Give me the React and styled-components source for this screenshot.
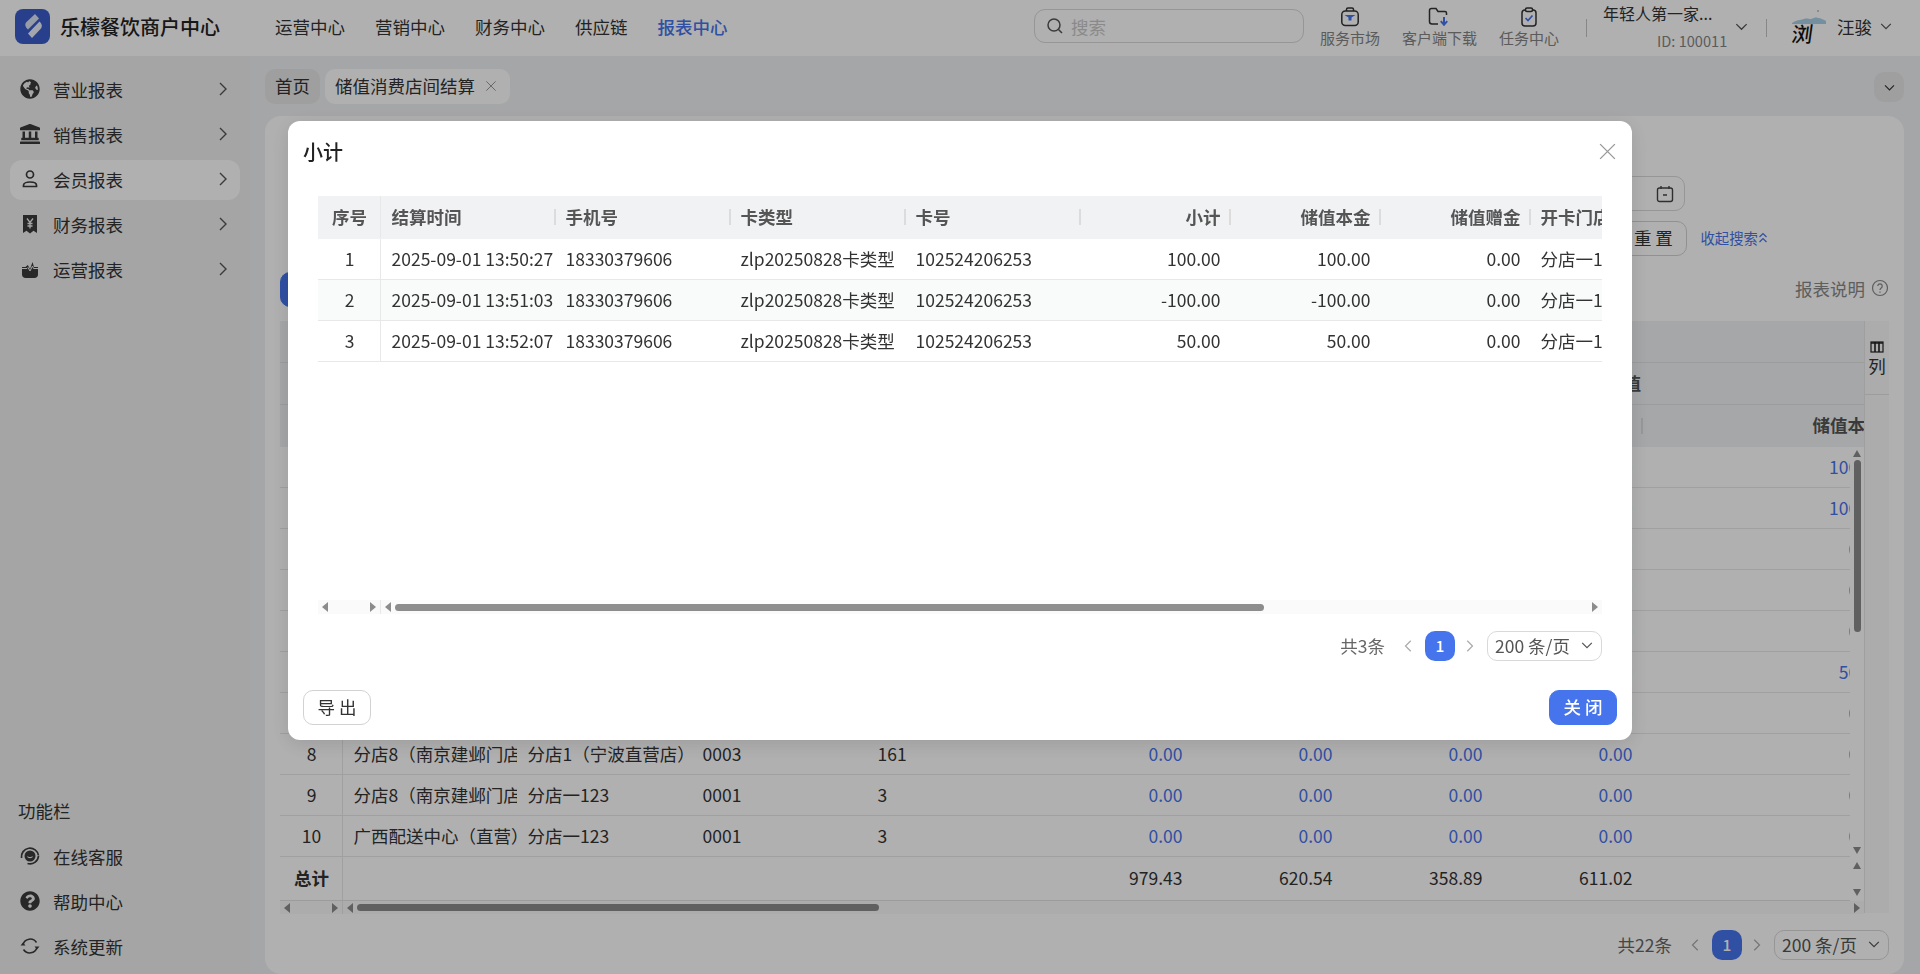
import React from 'react';
import styled, { createGlobalStyle } from 'styled-components';
import { FaGlobeAmericas, FaLandmark, FaQuestionCircle } from 'react-icons/fa';

const GlobalStyle = createGlobalStyle`
  * { box-sizing: border-box; }
  html, body { margin: 0; padding: 0; height: 100%; overflow: hidden; }
  body {
    font-family: "Noto Sans CJK SC", "Noto Sans", sans-serif;
    font-size: 17.5px;
    color: #333;
    background: #f0f1f3;
  }
`;

const BLUE = '#4674ec';

const Page = styled.div`
  width: 1920px;
  height: 974px;
  display: flex;
  flex-direction: column;
  overflow: hidden;
`;

const Header = styled.header`
  height: 56px;
  flex-shrink: 0;
  display: flex;
  align-items: center;
  padding: 0 27px 4px 15px;
  background: #fff;
`;

const Brand = styled.div`
  display: flex;
  align-items: center;
  gap: 10px;
  font-size: 20px;
  font-weight: 500;
  color: #222;
  white-space: nowrap;
`;

const Nav = styled.nav`
  display: flex;
  gap: 30px;
  margin-left: 55px;
`;

const NavLink = styled.a`
  color: ${p => (p.$active ? BLUE : '#333')};
  font-weight: ${p => (p.$active ? 500 : 400)};
  white-space: nowrap;
`;

const HeaderRight = styled.div`
  margin-left: auto;
  display: flex;
  align-items: center;
`;

const SearchBox = styled.div`
  width: 270px;
  height: 34px;
  margin-right: 16px;
  display: flex;
  align-items: center;
  gap: 7px;
  padding-left: 11px;
  border: 1px solid #d9d9d9;
  border-radius: 11px;
  color: #c9c9c9;
`;

const HeadAction = styled.div`
  display: flex;
  flex-direction: column;
  align-items: center;
  margin-right: 22px;
  margin-top: 2px;
  font-size: 15px;
  line-height: 18px;
  color: #858585;
  white-space: nowrap;
  &:nth-of-type(4) { margin-right: 27px; }
  svg { display: block; margin-bottom: 2px; }
`;

const HeadRule = styled.span`
  width: 1px;
  height: 18px;
  margin-left: ${p => p.$left || 0}px;
  margin-top: 3px;
  background: #c4c4c4;
`;

const Account = styled.div`
  width: 131px;
  margin-left: 16px;
  line-height: 20px;
  margin-top: 1px;
  small {
    display: block;
    margin-top: 8px;
    padding-left: 54px;
    font-size: 14.6px;
    color: #858585;
  }
`;

const AccountName = styled.div`
  white-space: nowrap;
  font-size: 16px;
`;

const Avatar = styled.div`
  width: 34px;
  height: 34px;
  margin-left: 25px;
  margin-top: 4px;
  position: relative;
  font-weight: 500;
  font-size: 21px;
  line-height: 44px;
  color: #111;
  svg { position: absolute; left: 0; top: -2px; }
`;

const AvatarGlyph = styled.span`
  display: inline-block;
  transform: skewX(-8deg);
`;

const UserName = styled.span`
  margin-left: 11px;
  margin-right: 7px;
  white-space: nowrap;
`;

const Body = styled.div`
  flex: 1;
  min-height: 0;
  display: flex;
`;

const Sidebar = styled.aside`
  width: 250px;
  flex-shrink: 0;
  padding: 14px 10px 7px;
  display: flex;
  flex-direction: column;
  justify-content: space-between;
  background: #f0f0f0;
`;

const MenuGroup = styled.div`
  display: flex;
  flex-direction: column;
  gap: 5px;
`;

const MenuItem = styled.div`
  height: 40px;
  display: flex;
  align-items: center;
  gap: 13px;
  padding: 0 10px 2px;
  border-radius: 12px;
  background: ${p => (p.$active ? '#fff' : 'transparent')};
  white-space: nowrap;
  svg:first-child { width: 20px; height: 20px; flex-shrink: 0; color: #3a3a3a; }
  svg:last-child:not(:first-child) { margin-left: auto; }
`;

const MenuCaption = styled.div`
  height: 24px;
  margin: 0 0 9px 8px;
  line-height: 24px;
  color: #333;
`;

const Main = styled.main`
  flex: 1;
  min-width: 0;
  padding: 13px 16px 0 15px;
  display: flex;
  flex-direction: column;
`;

const TabBar = styled.div`
  height: 35px;
  margin-bottom: 12px;
  flex-shrink: 0;
  display: flex;
  gap: 5px;
`;

const Tab = styled.div`
  height: 35px;
  display: flex;
  align-items: center;
  gap: 10px;
  padding: 0 ${p => (p.$current ? 13 : 10)}px 2px 10px;
  border-radius: 10px;
  background: ${p => (p.$current ? '#fff' : '#e6e6e6')};
  white-space: nowrap;
`;

const TabToggle = styled.div`
  width: 30px;
  height: 30px;
  margin: 3px 0 0 auto;
  display: flex;
  align-items: center;
  justify-content: center;
  border-radius: 10px;
  background: #e6e6e6;
`;

const Card = styled.section`
  flex: 1;
  min-height: 0;
  padding: 60px 15px 0;
  border-radius: 16px;
  background: #fff;
  overflow: hidden;
`;

const FormRow = styled.div`
  display: flex;
  justify-content: flex-end;
  align-items: center;
  gap: 13px;
  margin-bottom: 10px;
  padding-right: ${p => p.$inset}px;
`;

const DateInput = styled.div`
  width: 300px;
  height: 35px;
  display: flex;
  align-items: center;
  justify-content: flex-end;
  padding-right: 10px;
  border: 1px solid #d9d9d9;
  border-radius: 10px;
`;

const Button = styled.button`
  width: 68px;
  height: 35px;
  padding: 0 0 2px;
  border-radius: 10px;
  border: 1px solid ${p => (p.$primary ? BLUE : '#d2d2d2')};
  background: ${p => (p.$primary ? BLUE : '#fff')};
  color: ${p => (p.$primary ? '#fff' : '#333')};
  font: inherit;
  font-weight: ${p => (p.$primary ? 500 : 400)};
  white-space: nowrap;
`;

const TextLink = styled.a`
  color: ${BLUE};
  font-size: 14.4px;
  white-space: nowrap;
  display: flex;
  align-items: center;
  padding-bottom: 2px;
`;

const Toolbar = styled.div`
  height: 34px;
  margin: 16px 0 15px;
  display: flex;
  align-items: center;
  justify-content: space-between;
`;

const ReportHint = styled.div`
  display: flex;
  align-items: center;
  gap: 6px;
  padding-bottom: 2px;
  color: #888;
  white-space: nowrap;
`;

const TableFrame = styled.div`
  display: flex;
  height: 592px;
`;

const TableArea = styled.div`
  flex: 1;
  min-width: 0;
  display: flex;
  flex-direction: column;
`;

const ColumnSetter = styled.div`
  width: 25px;
  flex-shrink: 0;
  border-left: 1px solid #e6e6e6;
  background: #f9f9f9;
`;

const ColumnSetterTop = styled.div`
  height: 74px;
  padding-top: 20px;
  display: flex;
  flex-direction: column;
  align-items: center;
  border-bottom: 1px solid #e4e4e4;
  line-height: 22px;
  svg { margin-bottom: 2px; }
`;

const HeadWrap = styled.div`
  overflow: hidden;
  flex-shrink: 0;
  background: #f0f2f4;
`;

const GridRow = styled.div`
  display: grid;
  grid-template-columns: ${p => p.$cols};
  width: max-content;
  height: ${p => p.$h}px;
  background: ${p => p.$bg || 'transparent'};
  border-bottom: 1px solid ${p => p.$line || '#e8e8e8'};
`;

const Cell = styled.div`
  min-width: 0;
  display: flex;
  align-items: center;
  justify-content: ${p => (p.$align === 'right' ? 'flex-end' : p.$align === 'center' ? 'center' : 'flex-start')};
  padding: 0 9.5px 2px 10.5px;
  white-space: nowrap;
  overflow: hidden;
  color: ${p => (p.$link ? BLUE : '#333')};
  border-right: ${p => (p.$fixed ? '1px solid #e8e8e8' : '0')};
  grid-column: ${p => p.$span || 'auto'};
`;

const HeadCell = styled(Cell)`
  position: relative;
  overflow: visible;
  font-weight: 700;
  color: #555;
  ${p => p.$plain ? '' : `
  &::after {
    content: '';
    position: absolute;
    right: -1px;
    top: 50%;
    width: 2px;
    height: 16px;
    margin-top: -8px;
    background: #dcdcdc;
  }`}
`;

const GroupCell = styled(HeadCell)`
  padding-right: 1px;
`;

const Clip = styled.div`
  overflow: hidden;
  flex: 1;
  min-width: 0;
`;

const BodyPart = styled.div`
  display: flex;
  flex-shrink: 0;
  height: ${p => p.$h}px;
`;

const VScroll = styled.div`
  width: 14px;
  flex-shrink: 0;
  padding: ${p => p.$pad}px 0;
  display: flex;
  flex-direction: column;
  align-items: center;
`;

const VThumb = styled.div`
  width: 7px;
  height: ${p => p.$h}px;
  margin-top: 3px;
  border-radius: 4px;
  background: #8c8c8c;
`;

const TriUp = styled.i`
  width: 0;
  height: 0;
  border: 4.5px solid transparent;
  border-top: 0;
  border-bottom: 7px solid #8c8c8c;
`;

const TriDown = styled(TriUp)`
  margin-top: auto;
  border-bottom: 0;
  border-top: 7px solid #8c8c8c;
`;

const TriLeft = styled.i`
  width: 0;
  height: 0;
  flex-shrink: 0;
  border: 5px solid transparent;
  border-left: 0;
  border-right: 6px solid #8c8c8c;
`;

const TriRight = styled.i`
  width: 0;
  height: 0;
  flex-shrink: 0;
  border: 5px solid transparent;
  border-right: 0;
  border-left: 6px solid #8c8c8c;
`;

const HScroll = styled.div`
  height: ${p => p.$h}px;
  flex-shrink: 0;
  display: flex;
  align-items: center;
  background: #fafafa;
`;

const HFixed = styled.div`
  width: 63px;
  height: 100%;
  padding: 0 4px;
  display: flex;
  align-items: center;
  justify-content: space-between;
  border-right: 1px solid #e8e8e8;
`;

const HTrack = styled.div`
  flex: 1;
  min-width: 0;
  padding: 0 4px;
  display: flex;
  align-items: center;
  ${TriRight} { margin-left: auto; }
`;

const HThumb = styled.div`
  width: ${p => p.$w}px;
  height: 7px;
  margin-left: 4px;
  border-radius: 4px;
  background: #8c8c8c;
`;

const PagerRow = styled.div`
  height: 30px;
  flex-shrink: 0;
  display: flex;
  align-items: center;
  justify-content: flex-end;
  margin-top: ${p => p.$top}px;
  white-space: nowrap;
`;

const PagerTotal = styled.span`
  margin-right: 17px;
  padding-bottom: 2px;
  color: #666;
`;

const PagerNum = styled.span`
  width: 30px;
  height: 30px;
  margin: 0 7px 0 9px;
  padding-bottom: 2px;
  display: flex;
  align-items: center;
  justify-content: center;
  border-radius: 10px;
  background: ${BLUE};
  color: #fff;
  font-size: 15.5px;
  font-weight: 500;
`;

const PagerSelect = styled.div`
  width: 115px;
  height: 30px;
  margin-left: 11px;
  padding: 0 7px 2px;
  display: flex;
  align-items: center;
  justify-content: space-between;
  border: 1px solid #d9d9d9;
  border-radius: 10px;
  color: #555;
`;

const Overlay = styled.div`
  position: fixed;
  inset: 0;
  padding-top: 121px;
  display: flex;
  justify-content: center;
  align-items: flex-start;
  background: rgba(0, 0, 0, 0.31);
`;

const Modal = styled.div`
  width: 1344px;
  height: 619px;
  padding: 0 15px 15px;
  display: flex;
  flex-direction: column;
  border-radius: 12px;
  background: #fff;
  box-shadow: 0 4px 20px rgba(0, 0, 0, 0.12);
`;

const ModalHead = styled.div`
  height: 62px;
  padding-bottom: 2px;
  flex-shrink: 0;
  display: flex;
  align-items: center;
  justify-content: space-between;
  font-size: 20px;
  font-weight: 500;
  color: #222;
  margin-bottom: 13px;
`;

const ModalTable = styled.div`
  margin: 0 15px;
  height: 418px;
  flex-shrink: 0;
  display: flex;
  flex-direction: column;
`;

const ModalRows = styled.div`
  flex: 1;
  min-height: 0;
  overflow: hidden;
`;

const ModalFoot = styled.div`
  margin-top: auto;
  display: flex;
  justify-content: space-between;
`;

const ModalPager = styled.div`
  padding-right: 15px;
`;

const Chevron = ({ dir = 'right', size = 16, color = '#555' }) => {
  const d = { right: 'M6 2l6 6-6 6', down: 'M2.5 5.5L8 11l5.5-5.5', left: 'M10 2L4 8l6 6', up: 'M2.5 10.5L8 5l5.5 5.5' }[dir];
  return (
    <svg width={size} height={size} viewBox="0 0 16 16" fill="none" stroke={color} strokeWidth="1.4">
      <path d={d} />
    </svg>
  );
};

const LogoIcon = () => (
  <svg width="35" height="35" viewBox="0 0 35 35">
    <rect width="35" height="35" rx="8" fill="#3a5ecb" />
    <path d="M20 5l4 4.500L13 20.500c-3-2.500-3.500-5.500-1.500-7.500z" fill="#dbe2f5" />
    <path d="M24.500 12.500c2.800 2.500 3 5.500 1 7.500l-8.500 9-4-4.500z" fill="#eef1fb" />
  </svg>
);

const MemberIcon = () => (
  <svg viewBox="0 0 20 20" fill="none" stroke="currentColor" strokeWidth="1.7">
    <circle cx="10" cy="5.500" r="3.500" />
    <path d="M3.500 17.500v-1.200c0-2 2.800-3.300 6.500-3.300s6.500 1.300 6.500 3.300v1.200z" />
  </svg>
);

const ReceiptIcon = () => (
  <svg viewBox="0 0 20 20">
    <path d="M3 1h14v18l-3.500-2.300L10 19.500l-3.500-2.800L3 19z" fill="currentColor" />
    <path d="M7 4.500l3 4 3-4M10 8.500v6M7.500 9.500h5M7.500 12h5" fill="none" stroke="#f0f0f0" strokeWidth="1.300" />
  </svg>
);

const OpsIcon = () => (
  <svg viewBox="0 0 20 20">
    <path d="M2 8h3.500l2.300-2 2.200 4 2.500-7 1.500 5H18v7.500c0 2-1.500 3.500-3.500 3.500h-9C3.500 19 2 17.500 2 15.500z" fill="currentColor" />
    <path d="M2 9.500h5l1-1 2 3.500 2.500-5 1 2.500H18" fill="none" stroke="#f0f0f0" strokeWidth="1" />
  </svg>
);

const ServiceIcon = () => (
  <svg viewBox="0 0 20 20" fill="none" stroke="currentColor" strokeWidth="1.700">
    <path d="M1.500 12a8.500 8.500 0 0 1 17-2.500" />
    <path d="M18.500 10a8.500 8.500 0 0 1-11 7.500" />
    <circle cx="10" cy="10" r="5.500" fill="currentColor" stroke="none" />
    <path d="M7.500 10.500c1 1.500 4 1.500 5 0" stroke="#f0f0f0" strokeWidth="1.200" />
  </svg>
);

const RefreshIcon = () => (
  <svg viewBox="0 0 20 20" fill="none" stroke="currentColor" strokeWidth="1.500">
    <path d="M3 8.500A7.500 7.500 0 0 1 16.500 6.500" />
    <path d="M17 11.500A7.500 7.500 0 0 1 3.500 13.500" />
    <path d="M14.500 10.500h5L17 13.500zM.500 9.500h5L3 6.500z" fill="currentColor" stroke="none" />
  </svg>
);

const MarketIcon = () => (
  <svg width="20" height="20" viewBox="0 0 20 20" fill="none" stroke="#333" strokeWidth="1.500">
    <path d="M6.500 4V2.500c0-.8.700-1.500 1.500-1.500h4c.8 0 1.500.7 1.500 1.500V4" />
    <rect x="1.800" y="4" width="16.400" height="14.500" rx="3.500" />
    <path d="M4.500 8h11l-4 2.500v3h-3v-3z" fill={BLUE} stroke="none" />
  </svg>
);

const ClientIcon = () => (
  <svg width="22" height="20" viewBox="0 0 22 20" fill="none" stroke="#333" strokeWidth="1.500">
    <path d="M10 17H4a2.500 2.500 0 0 1-2.500-2.500V3.500C1.500 2.300 2.300 1.500 3.500 1.500H8l2 3h7c1 0 1.500.7 1.500 1.500v2" />
    <path d="M16 10v7M12.800 14.200l3.200 3.600 3.200-3.600" stroke={BLUE} strokeWidth="2" />
  </svg>
);

const TaskIcon = () => (
  <svg width="20" height="20" viewBox="0 0 20 20" fill="none" stroke="#333" strokeWidth="1.500">
    <rect x="3" y="3" width="14" height="16" rx="3" />
    <rect x="6.500" y="1" width="7" height="3.500" rx="1.500" fill="#fff" />
    <path d="M6.500 11l2.500 2.500 4.500-5" stroke={BLUE} strokeWidth="1.700" />
  </svg>
);

const SearchIcon = ({ color }) => (
  <svg width="18" height="18" viewBox="0 0 18 18" fill="none" stroke={color} strokeWidth="1.500">
    <circle cx="8" cy="8" r="6" />
    <path d="M12.500 12.500L16 16" />
  </svg>
);

const CloudIcon = () => (
  <svg width="34" height="18" viewBox="0 0 34 18">
    <path d="M0 14c4-3 8-3 12-4 2-1 5 0 7 0 3-1 5-2 7-1 3 0 6 2 8 3v3H0z" fill="#a9d0e6" />
    <circle cx="26" cy="2" r="0.800" fill="#888" />
  </svg>
);

const CalendarIcon = () => (
  <svg width="18" height="18" viewBox="0 0 18 18" fill="none" stroke="#444" strokeWidth="1.400">
    <rect x="1.500" y="3" width="15" height="13.500" rx="2" />
    <path d="M5 1v3M13 1v3M7 10h4" />
  </svg>
);

const HelpIcon = () => (
  <svg width="18" height="18" viewBox="0 0 18 18" fill="none" stroke="#888" strokeWidth="1.200">
    <circle cx="9" cy="9" r="7.500" />
    <path d="M6.800 7a2.200 2.200 0 1 1 3.400 1.900C9.400 9.500 9 10 9 11M9 12.500v1.300" />
  </svg>
);

const ColumnsIcon = () => (
  <svg width="14" height="12" viewBox="0 0 14 12" fill="none" stroke="#222" strokeWidth="1.200">
    <rect x="1" y="1" width="12" height="10" />
    <path d="M1 2h12M5 1v10M9 1v10" strokeWidth="1.600" />
  </svg>
);

const ArrowsIcon = () => (
  <svg width="10" height="12" viewBox="0 0 10 12" fill="none" stroke={BLUE} strokeWidth="1.200">
    <path d="M1.500 5l3.500-3.500L8.500 5M1.500 10L5 6.500 8.500 10" />
  </svg>
);

const CrossIcon = ({ size, color }) => (
  <svg width={size} height={size} viewBox="0 0 18 18" fill="none" stroke={color} strokeWidth="1.300">
    <path d="M2 2l14 14M16 2L2 16" />
  </svg>
);

const HScrollbar = ({ h, thumb }) => (
  <HScroll $h={h}>
    <HFixed>
      <TriLeft />
      <TriRight />
    </HFixed>
    <HTrack>
      <TriLeft />
      <HThumb $w={thumb} />
      <TriRight />
    </HTrack>
  </HScroll>
);

const Pager = ({ total, top }) => (
  <PagerRow $top={top}>
    <PagerTotal>共{total}条</PagerTotal>
    <Chevron dir="left" size={14} color="#aaa" />
    <PagerNum>1</PagerNum>
    <Chevron size={14} color="#aaa" />
    <PagerSelect>
      200 条/页
      <Chevron dir="down" size={14} />
    </PagerSelect>
  </PagerRow>
);

const menus = [
  { label: '营业报表', icon: <FaGlobeAmericas /> },
  { label: '销售报表', icon: <FaLandmark /> },
  { label: '会员报表', icon: <MemberIcon />, active: true },
  { label: '财务报表', icon: <ReceiptIcon /> },
  { label: '运营报表', icon: <OpsIcon /> },
];

const tools = [
  { label: '在线客服', icon: <ServiceIcon /> },
  { label: '帮助中心', icon: <FaQuestionCircle /> },
  { label: '系统更新', icon: <RefreshIcon /> },
];

const BG_COLS = '63px 174px repeat(3, 175px) repeat(4, 150px) 250px';
const MODAL_COLS = '63px 174px repeat(3, 175px) repeat(4, 150px)';

const bgRows = [
  { last: '100.00', nums: ['100.00', '100.00', '0.00', '100.00'] },
  { last: '100.00', nums: ['100.00', '100.00', '0.00', '100.00'] },
  { last: '0.00', nums: ['0.00', '0.00', '0.00', '0.00'] },
  { last: '0.00', nums: ['0.00', '0.00', '0.00', '0.00'] },
  { last: '0.00', nums: ['0.00', '0.00', '0.00', '0.00'] },
  { last: '50.00', nums: ['50.00', '50.00', '0.00', '50.00'] },
  { last: '0.00', nums: ['0.00', '0.00', '0.00', '0.00'] },
  { store: '分店8（南京建邺门店', card: '分店1（宁波直营店）', code: '0003', no: '161', last: '0.00', nums: ['0.00', '0.00', '0.00', '0.00'] },
  { store: '分店8（南京建邺门店', card: '分店一123', code: '0001', no: '3', last: '0.00', nums: ['0.00', '0.00', '0.00', '0.00'] },
  { store: '广西配送中心（直营）', card: '分店一123', code: '0001', no: '3', last: '0.00', nums: ['0.00', '0.00', '0.00', '0.00'] },
];

const records = [
  { time: '2025-09-01 13:50:27', sub: '100.00', base: '100.00' },
  { time: '2025-09-01 13:51:03', sub: '-100.00', base: '-100.00' },
  { time: '2025-09-01 13:52:07', sub: '50.00', base: '50.00' },
];

const BackgroundTable = () => (
  <TableFrame>
    <TableArea>
      <HeadWrap>
        <GridRow $cols={BG_COLS} $h={42} $line="#e2e2e2" />
        <GridRow $cols={BG_COLS} $h={42} $line="#e2e2e2">
          <GroupCell $span="2 / 10" $align="right" $plain>储值</GroupCell>
        </GridRow>
        <GridRow $cols={BG_COLS} $h={42} $line="transparent">
          <HeadCell $span="2 / 10" />
          <HeadCell $align="right" $plain>储值本金</HeadCell>
        </GridRow>
      </HeadWrap>
      <BodyPart $h={410}>
        <Clip>
          {bgRows.map((row, i) => (
            <GridRow key={i} $cols={BG_COLS} $h={41}>
              <Cell $align="center" $fixed>{i + 1}</Cell>
              <Cell>{row.store}</Cell>
              <Cell>{row.card}</Cell>
              <Cell>{row.code}</Cell>
              <Cell>{row.no}</Cell>
              {row.nums.map((n, j) => <Cell key={j} $align="right" $link>{n}</Cell>)}
              <Cell $align="right" $link>{row.last}</Cell>
            </GridRow>
          ))}
        </Clip>
        <VScroll $pad={3}>
          <TriUp />
          <VThumb $h={172} />
          <TriDown />
        </VScroll>
      </BodyPart>
      <BodyPart $h={44}>
        <Clip>
          <GridRow $cols={BG_COLS} $h={44} $line="#e2e2e2">
            <Cell $align="center" $fixed><b>总计</b></Cell>
            <Cell $span="2 / 6" />
            <Cell $align="right">979.43</Cell>
            <Cell $align="right">620.54</Cell>
            <Cell $align="right">358.89</Cell>
            <Cell $align="right">611.02</Cell>
          </GridRow>
        </Clip>
        <VScroll $pad={5}>
          <TriUp />
          <TriDown />
        </VScroll>
      </BodyPart>
      <HScrollbar h={13} thumb={522} />
    </TableArea>
    <ColumnSetter>
      <ColumnSetterTop>
        <ColumnsIcon />
        列
      </ColumnSetterTop>
    </ColumnSetter>
  </TableFrame>
);

const ModalTableView = () => (
  <ModalTable>
    <HeadWrap>
      <GridRow $cols={MODAL_COLS} $h={43} $line="transparent">
        <HeadCell $align="center" $fixed $plain>序号</HeadCell>
        <HeadCell>结算时间</HeadCell>
        <HeadCell>手机号</HeadCell>
        <HeadCell>卡类型</HeadCell>
        <HeadCell>卡号</HeadCell>
        <HeadCell $align="right">小计</HeadCell>
        <HeadCell $align="right">储值本金</HeadCell>
        <HeadCell $align="right">储值赠金</HeadCell>
        <HeadCell $plain>开卡门店</HeadCell>
      </GridRow>
    </HeadWrap>
    <ModalRows>
      {records.map((r, i) => (
        <GridRow key={r.time} $cols={MODAL_COLS} $h={41} $bg={i === 1 ? '#f9fafa' : '#fff'}>
          <Cell $align="center" $fixed>{i + 1}</Cell>
          <Cell>{r.time}</Cell>
          <Cell>18330379606</Cell>
          <Cell>zlp20250828卡类型</Cell>
          <Cell>102524206253</Cell>
          <Cell $align="right">{r.sub}</Cell>
          <Cell $align="right">{r.base}</Cell>
          <Cell $align="right">0.00</Cell>
          <Cell>分店一123</Cell>
        </GridRow>
      ))}
    </ModalRows>
    <HScrollbar h={14} thumb={869} />
  </ModalTable>
);

const App = () => (
  <Page>
    <GlobalStyle />
    <Header>
      <Brand>
        <LogoIcon />
        乐檬餐饮商户中心
      </Brand>
      <Nav>
        <NavLink>运营中心</NavLink>
        <NavLink>营销中心</NavLink>
        <NavLink>财务中心</NavLink>
        <NavLink>供应链</NavLink>
        <NavLink $active>报表中心</NavLink>
      </Nav>
      <HeaderRight>
        <SearchBox>
          <SearchIcon color="#555" />
          搜索
        </SearchBox>
        <HeadAction><MarketIcon />服务市场</HeadAction>
        <HeadAction><ClientIcon />客户端下载</HeadAction>
        <HeadAction><TaskIcon />任务中心</HeadAction>
        <HeadRule />
        <Account>
          <AccountName>年轻人第一家...</AccountName>
          <small>ID: 100011</small>
        </Account>
        <Chevron dir="down" size={15} />
        <HeadRule $left={17} />
        <Avatar>
          <CloudIcon />
          <AvatarGlyph>浏</AvatarGlyph>
        </Avatar>
        <UserName>汪骏</UserName>
        <Chevron dir="down" size={14} />
      </HeaderRight>
    </Header>
    <Body>
      <Sidebar>
        <MenuGroup>
          {menus.map(m => (
            <MenuItem key={m.label} $active={m.active}>
              {m.icon}
              {m.label}
              <Chevron />
            </MenuItem>
          ))}
        </MenuGroup>
        <MenuGroup>
          <MenuCaption>功能栏</MenuCaption>
          {tools.map(m => (
            <MenuItem key={m.label}>
              {m.icon}
              {m.label}
            </MenuItem>
          ))}
        </MenuGroup>
      </Sidebar>
      <Main>
        <TabBar>
          <Tab>首页</Tab>
          <Tab $current>
            储值消费店间结算
            <CrossIcon size={12} color="#888" />
          </Tab>
          <TabToggle><Chevron dir="down" size={13} color="#333" /></TabToggle>
        </TabBar>
        <Card>
          <FormRow $inset={204}>
            <DateInput><CalendarIcon /></DateInput>
          </FormRow>
          <FormRow $inset={121}>
            <Button>重 置</Button>
            <TextLink>收起搜索<ArrowsIcon /></TextLink>
          </FormRow>
          <Toolbar>
            <Button $primary>查 询</Button>
            <ReportHint>报表说明<HelpIcon /></ReportHint>
          </Toolbar>
          <BackgroundTable />
          <Pager total={22} top={17} />
        </Card>
      </Main>
    </Body>
    <Overlay>
      <Modal>
        <ModalHead>
          小计
          <CrossIcon size={19} color="#999" />
        </ModalHead>
        <ModalTableView />
        <ModalPager>
          <Pager total={3} top={17} />
        </ModalPager>
        <ModalFoot>
          <Button>导 出</Button>
          <Button $primary>关 闭</Button>
        </ModalFoot>
      </Modal>
    </Overlay>
  </Page>
);

export default App;
